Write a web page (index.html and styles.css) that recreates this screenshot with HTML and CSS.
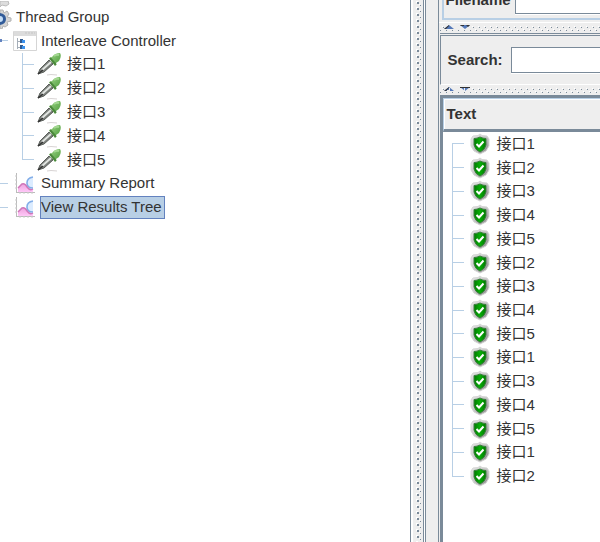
FILE: index.html
```
<!DOCTYPE html>
<html lang="en">
<head>
<meta charset="utf-8">
<title>View Results Tree</title>
<link rel="stylesheet" href="styles.css">
</head>
<body>
<svg class="defs" aria-hidden="true">
  <defs>
    <linearGradient id="metal" x1="0" y1="0" x2="1" y2="1"><stop offset="0" stop-color="#ececec"/><stop offset=".5" stop-color="#c4c4c4"/><stop offset="1" stop-color="#808080"/></linearGradient>
    <linearGradient id="bulb" x1="0" y1="0" x2="1" y2="1"><stop offset="0" stop-color="#9bd485"/><stop offset="1" stop-color="#4c9a3b"/></linearGradient>
    <linearGradient id="green" x1="0" y1="0" x2="1" y2="0"><stop offset="0" stop-color="#007c00"/><stop offset=".5" stop-color="#08ae08"/><stop offset="1" stop-color="#007800"/></linearGradient>
    <linearGradient id="pink" x1="0" y1="0" x2="0" y2="1"><stop offset="0" stop-color="#eda0dc"/><stop offset="1" stop-color="#ffc8f8"/></linearGradient>
    <symbol id="dropper" viewBox="0 0 24 24">
      <path d="M10 23q3-1 10 0" fill="none" stroke="#d8d4d4"/>
      <path d="M1 22l2-5 9-9 4 4-9 8z" fill="#7c807c" stroke="#5c605c"/>
      <path d="M5 18l9-8" stroke="#e2e5e2" stroke-width="2"/>
      <path d="M1 22l5-4" stroke="#333" stroke-width="1.500"/>
      <path d="M12 6l3-1q3-4 8-4 2 3-1 8l-3 2-1 3z" fill="url(#bulb)"/>
      <path d="M13 6l6 7" stroke="#4b873c" stroke-width="2"/>
      <path d="M17 4q2-2 5-1" fill="none" stroke="#a4d892" stroke-width="2"/>
    </symbol>
    <symbol id="shield" viewBox="0 0 20 22">
      <path d="M10 1l2 1.500 5 .5 2 3v7l-3 5-6 3-6-3-3-5V6l2-3 5-.5z" fill="url(#metal)" stroke="#d6d6d6"/>
      <path d="M10 4q3 1.500 6 1.500V12q-1 5-6 7-5-2-6-7V5.500Q7 5.500 10 4z" fill="url(#green)" stroke="#3c7c40"/>
      <path d="M6.500 11l2.500 2.500 4.500-5" fill="none" stroke="#fff" stroke-width="2"/>
    </symbol>
    <symbol id="chart" viewBox="0 0 22 22">
      <path d="M2.500 1v19M2 20.500h19" stroke="#bbb" fill="none"/>
      <path d="M1 4h2M1 8h2M1 12h2M1 16h2M6 20v2M10 20v2M14 20v2M18 20v2" stroke="#ccc"/>
      <path d="M12 17V11q0-6 7-6v13z" fill="#dcecff"/>
      <path d="M19 5q-6 1-6 6 0 5 6 5" fill="none" stroke="#83aee8" stroke-width="1.500"/>
      <path d="M4 20v-4l4-4q3-1 5 3 3 4 6 2v3z" fill="url(#pink)"/>
      <path d="M4 16l4-4q3-1 5 3 3 4 6 2" fill="none" stroke="#cf77b9" stroke-width="1.500"/>
    </symbol>
    <symbol id="window" viewBox="0 0 24 22">
      <path d="M.5 1.500h23v19H.5z" fill="#fff" stroke="#d5d5d5"/>
      <path d="M1 1h22v5H1z" fill="#dcdcdc"/><path d="M12 3h10" stroke="#c5c5c5" stroke-dasharray="2 1"/>
      <path d="M4.500 8v11M5 11.500h4M5 17.500h4" stroke="#a5aeb8" fill="none"/>
      <path d="M7 9h3v4H7zM7 15h3v4H7z" fill="#345b8e"/><path d="M9 10h3v3H9zM9 16h3v3H9z" fill="#3c92ed"/>
    </symbol>
    <symbol id="gear" viewBox="0 0 12 28">
      <path d="M0 0h8l1 3-3 2-4-1-2 2z" fill="#ddd" stroke="#bbb"/>
      <path d="M0 9h3l1 3 3-2 2 3-2 3 4 1v3l-4 1 1 3-3 2-2-1-1 3H0z" fill="#d4d4d4" stroke="#b2b2b2"/>
      <path d="M0 12q6 1 6 6t-6 6z" fill="#315b99"/><path d="M0 15q3 0 3 3t-3 3z" fill="#c4ddf6"/>
    </symbol>
    <symbol id="arrows" viewBox="0 0 27 5">
      <path d="M0 4l5-4 5 4z" fill="#5478b8"/><path d="M0 4l5-4v1L2 4z" fill="#333"/>
      <path d="M16 0h10l-5 4z" fill="#5478b8"/><path d="M16 0h4v1h-3zM22 0h4l-2 2z" fill="#333"/>
    </symbol>
    <symbol id="arrows-cut" viewBox="0 0 27 5">
      <path d="M0 4l5-4 5 4z" fill="#5478b8"/><path d="M0 4l5-4v1L2 4z" fill="#333"/>
      <path d="M16 0h10l-5 4z" fill="#5478b8"/><path d="M16 0h10v1H16z" fill="#333"/>
      <path d="M5.500 1v4M20.500 1v4M3 3.500h2" stroke="#eee"/>
    </symbol>
  </defs>
</svg>
<main class="app">
  <nav class="side" aria-label="Test plan">
    <ul class="tree plan">
      <li class="root"><svg class="gear"><use href="#gear"/></svg><span>Thread Group</span></li>
      <li class="level1"><i class="tick open"></i><svg class="icon"><use href="#window"/></svg><span>Interleave Controller</span></li>
      <li class="level2"><i class="elbow"></i><svg class="icon"><use href="#dropper"/></svg><span>接口1</span></li>
      <li class="level2"><i class="elbow"></i><svg class="icon"><use href="#dropper"/></svg><span>接口2</span></li>
      <li class="level2"><i class="elbow"></i><svg class="icon"><use href="#dropper"/></svg><span>接口3</span></li>
      <li class="level2"><i class="elbow"></i><svg class="icon"><use href="#dropper"/></svg><span>接口4</span></li>
      <li class="level2"><i class="elbow end"></i><svg class="icon"><use href="#dropper"/></svg><span>接口5</span></li>
      <li class="level1"><i class="tick"></i><svg class="icon"><use href="#chart"/></svg><span>Summary Report</span></li>
      <li class="level1"><i class="tick"></i><svg class="icon"><use href="#chart"/></svg><span class="selected">View Results Tree</span></li>
    </ul>
  </nav>
  <div class="split-v"></div>
  <section class="content">
    <div class="file-panel">
      <div class="file-box"><label for="file">Filename</label><input id="file" type="text"></div>
    </div>
    <div class="split-h"><svg class="arrows"><use href="#arrows"/></svg></div>
    <div class="search-panel"><label for="search">Search:</label><input id="search" type="text"></div>
    <div class="split-h"><svg class="arrows"><use href="#arrows-cut"/></svg></div>
    <div class="results">
      <h2>Text</h2>
      <ul class="tree samples">
        <li><i class="elbow start"></i><svg class="shield"><use href="#shield"/></svg><span>接口1</span></li>
        <li><i class="elbow"></i><svg class="shield"><use href="#shield"/></svg><span>接口2</span></li>
        <li><i class="elbow"></i><svg class="shield"><use href="#shield"/></svg><span>接口3</span></li>
        <li><i class="elbow"></i><svg class="shield"><use href="#shield"/></svg><span>接口4</span></li>
        <li><i class="elbow"></i><svg class="shield"><use href="#shield"/></svg><span>接口5</span></li>
        <li><i class="elbow"></i><svg class="shield"><use href="#shield"/></svg><span>接口2</span></li>
        <li><i class="elbow"></i><svg class="shield"><use href="#shield"/></svg><span>接口3</span></li>
        <li><i class="elbow"></i><svg class="shield"><use href="#shield"/></svg><span>接口4</span></li>
        <li><i class="elbow"></i><svg class="shield"><use href="#shield"/></svg><span>接口5</span></li>
        <li><i class="elbow"></i><svg class="shield"><use href="#shield"/></svg><span>接口1</span></li>
        <li><i class="elbow"></i><svg class="shield"><use href="#shield"/></svg><span>接口3</span></li>
        <li><i class="elbow"></i><svg class="shield"><use href="#shield"/></svg><span>接口4</span></li>
        <li><i class="elbow"></i><svg class="shield"><use href="#shield"/></svg><span>接口5</span></li>
        <li><i class="elbow"></i><svg class="shield"><use href="#shield"/></svg><span>接口1</span></li>
        <li><i class="elbow end"></i><svg class="shield"><use href="#shield"/></svg><span>接口2</span></li>
      </ul>
    </div>
  </section>
</main>
</body>
</html>
```
FILE: styles.css
```
:root {
  --line: #7a8a99;
  --light: #b8cfe5;
  --face: #eee;
}
* { box-sizing: border-box; }
body {
  margin: 0;
  background: var(--face);
  color: #333;
  font: 15px/20px "Liberation Sans", "Noto Sans CJK SC", sans-serif;
}
.defs { position: absolute; width: 0; height: 0; }
.app { display: flex; min-height: 100vh; overflow: hidden; }
.side {
  flex: 411 1 0;
  background: #fff;
  border-right: 1px solid var(--line);
  padding-top: 5px;
}
.tree {
  display: flex;
  flex-direction: column;
  list-style: none;
  margin: 0;
  padding: 0;
}
.tree li { display: flex; flex: 1 1 0; min-height: 0; align-items: center; white-space: nowrap; }
.tree svg { flex: none; }
.plan { height: 214px; }
.samples { height: 356px; }
.root .gear { width: 12px; height: 28px; margin: -4px 4px 0 0; }
.icon { width: 24px; height: 22px; }
.tick { width: 8px; height: 1px; margin-right: 5px; background: var(--light); }
.open { border-left: 2px solid #6382bf; height: 3px; background: linear-gradient(var(--light), var(--light)) center / 100% 1px no-repeat; }
.level1 span { margin-left: 3px; border: 1px solid transparent; }
.level1 .selected { background: var(--light); border-color: #6382bf; padding: 0 2px 0 0; height: 23px; }
.level2 { padding-left: 22px; }
.level2 .icon { height: 24px; margin: 0 6px 0 3px; }
.elbow {
  width: 12px;
  align-self: stretch;
  background:
    linear-gradient(var(--light), var(--light)) 0 50% / 100% 1px no-repeat,
    linear-gradient(var(--light), var(--light)) 0 0 / 1px 100% no-repeat;
}
.start {
  background:
    linear-gradient(var(--light), var(--light)) 0 50% / 100% 1px no-repeat,
    linear-gradient(var(--light), var(--light)) 0 100% / 1px 50% no-repeat;
}
.end {
  background:
    linear-gradient(var(--light), var(--light)) 0 50% / 100% 1px no-repeat,
    linear-gradient(var(--light), var(--light)) 0 0 / 1px 50% no-repeat;
}
.split-v {
  width: 15px;
  border-left: 2px solid #fff;
  border-right: 1px solid var(--line);
  background:
    linear-gradient(var(--line), var(--line)) 10px 0 / 1px 100% no-repeat,
    linear-gradient(#fff, #fff) 11px 0 / 1px 100% no-repeat,
    linear-gradient(var(--line) 2px, transparent 0) 4px 2px / 2px 6px repeat-y,
    linear-gradient(#fff 2px, transparent 0) 3px 1px / 2px 6px repeat-y,
    linear-gradient(var(--line) 1px, transparent 0) 7px 5px / 1px 6px repeat-y,
    linear-gradient(#fff 1px, transparent 0) 6px 4px / 1px 6px repeat-y,
    var(--face);
}
.content {
  flex: 162 1 0;
  margin-left: 12px;
  min-width: 0;
  display: flex;
  flex-direction: column;
  border-left: 1px solid var(--line);
}
.file-panel {
  height: 23px;
  overflow: hidden;
  display: flex;
  align-items: flex-end;
  border-bottom: 1px solid #fff;
  padding: 0 0 2px 3px;
}
.file-box {
  flex: 1;
  display: flex;
  align-items: flex-end;
  border: solid var(--light);
  border-width: 0 0 2px 2px;
  padding: 0 0 4px 2px;
}
label, h2 { font-size: 15px; font-weight: bold; }
.file-box label { padding-bottom: 4px; }
input {
  flex: 1;
  min-width: 0;
  height: 26px;
  padding: 0 4px;
  border: 1px solid var(--line);
  border-right: 0;
  background: #fff;
  box-shadow: 0 1px #fff;
  outline: 0;
}
.file-box input { margin-left: 4px; }
.split-h {
  height: 11px;
  background:
    linear-gradient(90deg, var(--line) 1px, transparent 0) 3px 4px / 6px 1px repeat-x,
    linear-gradient(90deg, var(--line) 1px, transparent 0) 0 7px / 6px 1px repeat-x,
    linear-gradient(90deg, #fff 1px, transparent 0) 2px 3px / 6px 1px repeat-x,
    linear-gradient(90deg, #fff 1px, transparent 0) 5px 6px / 6px 1px repeat-x,
    var(--face);
  padding: 2px 0 0 4px;
  margin-left: 1px;
  border-bottom: 1px solid var(--line);
}
.arrows { display: block; width: 27px; height: 5px; background: var(--face); }
.search-panel {
  height: 50px;
  display: flex;
  align-items: center;
  margin: 1px 0 0 1px;
  border: solid var(--line);
  border-width: 1px 0 0 1px;
  border-bottom: 1px solid #fff;
  padding-left: 7px;
}
.search-panel input { margin-left: 8px; }
.results {
  flex: 1;
  margin-left: 1px;
  border: solid var(--line);
  border-width: 2px 0 0 3px;
  background: #fff;
}
h2 {
  margin: 0;
  height: 34px;
  padding: 4px 0 0 3px;
  line-height: 22px;
  background: var(--face);
  border: solid var(--light);
  border-width: 1px 0 1px 1px;
  box-shadow: inset 1px 1px #fff;
  border-bottom: 3px solid var(--line);
}
.samples { padding-left: 9px; }
.shield { width: 20px; height: 22px; margin: 0 7px 0 6px; }
```
